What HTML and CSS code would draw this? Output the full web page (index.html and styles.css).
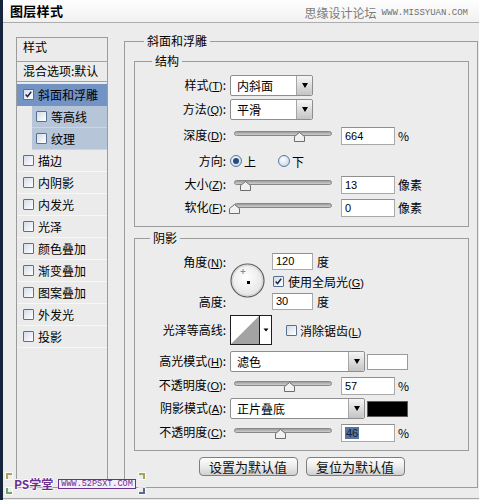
FILE: index.html
```html
<!DOCTYPE html>
<html lang="zh-CN">
<head>
<meta charset="utf-8">
<title>图层样式</title>
<link rel="stylesheet" href="styles.css">
</head>
<body>
<div class="dialog">
  <header class="titlebar">
    <span class="title">图层样式</span>
    <span class="wm">思缘设计论坛<span class="wm-url">WWW.MISSYUAN.COM</span></span>
  </header>

  <div class="main">
    <div class="list">
      <div class="lh">样式</div>
      <div class="lblend">混合选项:默认</div>
      <div class="li sel"><span class="cb"><svg viewBox="0 0 11 11" width="9" height="9"><path d="M2 5.5 L4.3 8 L8.8 2.2" fill="none" stroke="#1d2a44" stroke-width="1.8"/></svg></span>斜面和浮雕</div>
      <div class="li sub"><span class="cb"></span>等高线</div>
      <div class="li sub"><span class="cb"></span>纹理</div>
      <div class="li"><span class="cb"></span>描边</div>
      <div class="li"><span class="cb"></span>内阴影</div>
      <div class="li"><span class="cb"></span>内发光</div>
      <div class="li"><span class="cb"></span>光泽</div>
      <div class="li"><span class="cb"></span>颜色叠加</div>
      <div class="li"><span class="cb"></span>渐变叠加</div>
      <div class="li"><span class="cb"></span>图案叠加</div>
      <div class="li"><span class="cb"></span>外发光</div>
      <div class="li"><span class="cb"></span>投影</div>
    </div>

    <fieldset class="outer">
      <legend class="lg-outer">斜面和浮雕</legend>

      <fieldset class="grp grp-struct">
        <legend class="lg-struct">结构</legend>
        <div class="row r-sel">
          <span class="lbl">样式<span class="mn">(<u>T</u>)</span>:</span>
          <div class="select s-short"><span class="val">内斜面</span><span class="arr"><i></i></span></div>
        </div>
        <div class="row r-sel r-sel2">
          <span class="lbl">方法<span class="mn">(<u>Q</u>)</span>:</span>
          <div class="select s-short"><span class="val">平滑</span><span class="arr"><i></i></span></div>
        </div>
        <div class="row r-sl r-depth">
          <span class="lbl">深度<span class="mn">(<u>D</u>)</span>:</span>
          <div class="slider"><div class="track"></div><svg class="thumb" style="--v:0.664" viewBox="0 0 11 10" width="11" height="10"><polygon points="5.5,0.5 10.5,4.5 10.5,9.5 0.5,9.5 0.5,4.5" fill="#f1f1f1" stroke="#6d6d6d"/></svg></div>
          <span class="num">664</span><span class="unit">%</span>
        </div>
        <div class="row r-dir">
          <span class="lbl">方向:</span>
          <span class="radio on"></span><span class="rtxt">上</span>
          <span class="radio r2"></span><span class="rtxt">下</span>
        </div>
        <div class="row r-sl r-size">
          <span class="lbl">大小<span class="mn">(<u>Z</u>)</span>:</span>
          <div class="slider"><div class="track"></div><svg class="thumb" style="--v:0.115" viewBox="0 0 11 10" width="11" height="10"><polygon points="5.5,0.5 10.5,4.5 10.5,9.5 0.5,9.5 0.5,4.5" fill="#f1f1f1" stroke="#6d6d6d"/></svg></div>
          <span class="num">13</span><span class="unit">像素</span>
        </div>
        <div class="row r-sl r-soft">
          <span class="lbl">软化<span class="mn">(<u>F</u>)</span>:</span>
          <div class="slider"><div class="track"></div><svg class="thumb" style="--v:0" viewBox="0 0 11 10" width="11" height="10"><polygon points="5.5,0.5 10.5,4.5 10.5,9.5 0.5,9.5 0.5,4.5" fill="#f1f1f1" stroke="#6d6d6d"/></svg></div>
          <span class="num">0</span><span class="unit">像素</span>
        </div>
      </fieldset>

      <fieldset class="grp grp-shadow">
        <legend class="lg-shadow">阴影</legend>
        <div class="angle">
          <div class="alabels">
            <span class="albl">角度<span class="mn">(<u>N</u>)</span>:</span>
            <span class="albl">高度:</span>
          </div>
          <svg class="dial" viewBox="0 0 35 35" width="35" height="35">
            <defs>
              <radialGradient id="dg" cx="0.45" cy="0.4" r="0.6">
                <stop offset="0" stop-color="#ffffff"/>
                <stop offset="1" stop-color="#e4e4e4"/>
              </radialGradient>
            </defs>
            <circle cx="17.5" cy="17.5" r="16.5" fill="url(#dg)" stroke="#5e5e5e" stroke-width="1.2"/>
            <circle cx="17.5" cy="17.5" r="15.2" fill="none" stroke="#c9c9c9" stroke-width="0.8"/>
            <path d="M13 6 V11 M10.5 8.5 H15.5" stroke="#8a8a8a" stroke-width="1"/>
            <rect x="17" y="18" width="3" height="3" fill="#000"/>
          </svg>
          <div class="acol">
            <div class="aline"><span class="num n-ang">120</span><span class="unit u-deg">度</span></div>
            <div class="aline chk"><span class="cb cb-glob"><svg viewBox="0 0 11 11" width="9" height="9"><path d="M2 5.5 L4.3 8 L8.8 2.2" fill="none" stroke="#1d2a44" stroke-width="1.8"/></svg></span><span>使用全局光<span class="mn">(<u>G</u>)</span></span></div>
            <div class="aline"><span class="num n-ang">30</span><span class="unit u-deg">度</span></div>
          </div>
        </div>
        <div class="row r-contour">
          <span class="lbl">光泽等高线:</span>
          <svg class="contour" viewBox="0 0 42 30" width="42" height="30">
            <rect x="0.5" y="0.5" width="41" height="29" fill="#fff" stroke="#1e1e1e"/>
            <polygon points="1,29 29,1 29,29" fill="#a3a3a3"/>
            <line x1="29.5" y1="0.5" x2="29.5" y2="29.5" stroke="#1e1e1e"/>
            <polygon points="33.5,13.5 38.5,13.5 36,16.5" fill="#000"/>
          </svg>
          <span class="cb cb-aa"></span><span>消除锯齿<span class="mn">(<u>L</u>)</span></span>
        </div>
        <div class="row r-sel r-hl">
          <span class="lbl">高光模式<span class="mn">(<u>H</u>)</span>:</span>
          <div class="select s-long"><span class="val">滤色</span><span class="arr"><i></i></span></div>
          <span class="swatch sw-white"></span>
        </div>
        <div class="row r-sl r-op1">
          <span class="lbl">不透明度<span class="mn">(<u>O</u>)</span>:</span>
          <div class="slider"><div class="track"></div><svg class="thumb" style="--v:0.57" viewBox="0 0 11 10" width="11" height="10"><polygon points="5.5,0.5 10.5,4.5 10.5,9.5 0.5,9.5 0.5,4.5" fill="#f1f1f1" stroke="#6d6d6d"/></svg></div>
          <span class="num">57</span><span class="unit">%</span>
        </div>
        <div class="row r-sel r-sh">
          <span class="lbl">阴影模式<span class="mn">(<u>A</u>)</span>:</span>
          <div class="select s-long"><span class="val">正片叠底</span><span class="arr"><i></i></span></div>
          <span class="swatch sw-black"></span>
        </div>
        <div class="row r-sl r-op2">
          <span class="lbl">不透明度<span class="mn">(<u>C</u>)</span>:</span>
          <div class="slider"><div class="track"></div><svg class="thumb" style="--v:0.47" viewBox="0 0 11 10" width="11" height="10"><polygon points="5.5,0.5 10.5,4.5 10.5,9.5 0.5,9.5 0.5,4.5" fill="#f1f1f1" stroke="#6d6d6d"/></svg></div>
          <span class="num"><span class="hl">46</span></span><span class="unit">%</span>
        </div>
      </fieldset>

      <div class="btns">
        <button class="btn" type="button">设置为默认值</button>
        <button class="btn" type="button">复位为默认值</button>
      </div>
    </fieldset>
  </div>

  <div class="footer"></div>

  <div class="wm2">
    <span class="cn cn-tl"></span><span class="cn cn-tr"></span>
    <span class="cn cn-bl"></span><span class="cn cn-br"></span>
    <span class="wm2-ps">PS学堂</span>
    <span class="wm2-url">WWW.52PSXT.COM</span>
  </div>
</div>
</body>
</html>
```

FILE: styles.css
```css
* { box-sizing: border-box; }
html, body { margin: 0; padding: 0; }
body {
  width: 479px;
  height: 500px;
  overflow: hidden;
  background: #ececec;
  font-family: "Noto Sans CJK SC", "Liberation Sans", sans-serif;
  font-size: 12px;
  color: #000;
}
.dialog {
  position: relative;
  height: 500px;
  border-left: 3px solid #14243a;
  background: #ececec;
}

/* title bar */
.titlebar {
  height: 23px;
  border-bottom: 1px solid #adadad;
  background: linear-gradient(#fefefe, #f1f1f1);
  display: flex;
  align-items: center;
  justify-content: space-between;
  padding: 0 11px 0 7px;
}
.title { font-weight: bold; font-size: 13px; line-height: 16px; letter-spacing: 0.3px; }
.wm { color: #7b7b7b; font-size: 12px; line-height: 14px; display: flex; align-items: center; padding-top: 3px; }
.wm-url { font-family: "Liberation Mono", monospace; font-size: 9px; margin-left: 5px; color: #6f6f6f; }

.main { display: flex; align-items: flex-start; }

/* left list */
.list {
  margin: 14px 0 0 13px;
  width: 92px;
  height: 451px;
  border: 1px solid #9c9c9c;
  background: #ebebeb;
}
.lh {
  height: 24px;
  line-height: 18px;
  padding-left: 6px;
  border-bottom: 1px solid #a2a2a2;
}
.lblend {
  height: 20px;
  line-height: 17px;
  padding-left: 6px;
  border-bottom: 1px solid #a2a2a2;
  white-space: nowrap;
}
.li {
  height: 22px;
  display: flex;
  align-items: center;
  padding-left: 6px;
  border-bottom: 1px solid #f7f7f7;
  line-height: 14px;
  white-space: nowrap;
}
.li.sel { margin-top: 2px; background: #7393c4; border-bottom-color: #7393c4; }
.li.sub { margin-left: 15px; padding-left: 4px; background: #b7c5d8; border-bottom-color: #ccd6e3; }

.cb {
  display: inline-flex;
  align-items: center;
  justify-content: center;
  width: 11px;
  height: 11px;
  margin-right: 4px;
  border: 1px solid #56708f;
  border-radius: 1px;
  background: linear-gradient(135deg, #d3dce8, #ffffff);
  flex: none;
}

/* fieldsets */
fieldset { margin: 0; min-width: 0; border: 1px solid #9c9c9c; }
legend { font-size: 12px; line-height: 16px; padding: 0 3px; }
.outer {
  margin: 10px 0 0 16px;
  width: 354px;
  padding: 4px 8px 11px 9px;
}
.lg-outer { margin-left: 10px; }
.grp { padding: 0 0 9px 0; }
.grp-struct { padding-top: 6px; }
.grp-shadow { margin-top: 3px; padding-top: 7px; padding-bottom: 8px; }
.lg-struct { margin-left: 17px; }
.lg-shadow { margin-left: 15px; }

.row { display: flex; align-items: center; white-space: nowrap; }
.lbl { width: 91px; margin-right: 4px; text-align: right; line-height: 14px; flex: none; }
.mn { font-family: "Liberation Sans", sans-serif; font-size: 11px; }

.r-sel { height: 21px; }
.r-sel2 { margin-top: 3px; }
.r-sl { height: 19px; }
.r-depth { margin-top: 6px; }
.r-dir { height: 20px; margin-top: 6px; }
.r-size, .r-soft { margin-top: 4px; }

/* select */
.select {
  display: flex;
  height: 21px;
  border: 1px solid #8e8e8e;
  border-radius: 2px;
  background: #fff;
  flex: none;
}
.s-short { width: 83px; }
.s-long { width: 135px; }
.select .val { flex: 1; padding-left: 6px; line-height: 19px; }
.select .arr {
  width: 16px;
  border-left: 1px solid #a5a5a5;
  border-radius: 0 2px 2px 0;
  background: linear-gradient(#f6f6f6, #d8d8d8 60%, #c4c4c4);
  display: flex;
  align-items: center;
  justify-content: center;
}
.select .arr i {
  display: block;
  width: 0;
  height: 0;
  border-left: 3px solid transparent;
  border-right: 3px solid transparent;
  border-top: 5px solid #000;
}

/* slider */
.slider {
  position: relative;
  width: 106px;
  height: 19px;
  padding: 5px 4px 0;
  margin-right: 5px;
  flex: none;
}
.track {
  height: 5px;
  border: 1px solid #878787;
  border-radius: 3px;
  background: linear-gradient(#9d9d9d, #cfcfcf);
}
.thumb {
  position: absolute;
  top: 6px;
  left: calc(4px + var(--v) * 98px - 5.5px);
}

/* numeric fields */
.num {
  display: inline-block;
  width: 54px;
  height: 18px;
  border: 1px solid #a9a9a9;
  border-top-color: #8f8f8f;
  background: #fff;
  font-family: "Liberation Sans", sans-serif;
  font-size: 11px;
  line-height: 16px;
  padding-left: 3px;
  flex: none;
}
.unit { margin-left: 3px; line-height: 14px; }
.hl { background: #56759f; color: #14203a; padding: 0 1px; }

/* radio */
.radio {
  width: 12px;
  height: 12px;
  border-radius: 50%;
  border: 1px solid #5878a0;
  background: radial-gradient(circle at 40% 35%, #ffffff, #b9cde6);
  display: inline-flex;
  align-items: center;
  justify-content: center;
  flex: none;
}
.radio.on::after {
  content: "";
  width: 6px;
  height: 6px;
  border-radius: 50%;
  background: #2a4a7c;
}
.radio.r2 { margin-left: 22px; }
.rtxt { margin-left: 2px; }

/* angle block */
.angle { display: flex; height: 57px; }
.alabels {
  width: 91px;
  margin-right: 4px;
  display: flex;
  flex-direction: column;
  justify-content: space-between;
  align-items: flex-end;
}
.albl { height: 17px; line-height: 17px; white-space: nowrap; }
.dial { margin-top: 10px; flex: none; }
.acol { margin-left: 7px; display: flex; flex-direction: column; }
.aline { display: flex; align-items: center; height: 17px; white-space: nowrap; }
.aline + .aline { margin-top: 3px; }
.n-ang { width: 41px; height: 17px; line-height: 15px; }
.u-deg { margin-left: 4px; }
.cb-glob { margin-left: 1px; margin-right: 4px; }

.r-contour { height: 30px; margin-top: 5px; }
.contour { flex: none; }
.cb-aa { margin-left: 14px; margin-right: 3px; }

.r-hl { margin-top: 6px; }
.r-op1 { margin-top: 4px; }
.r-sh { margin-top: 3px; }
.r-op2 { margin-top: 4px; }

.swatch { width: 41px; height: 16px; margin-left: 2px; flex: none; }
.sw-white { background: #fff; border: 1px solid #9b9b9b; }
.sw-black { background: #000; border: 1px solid #5a5a5a; }

/* buttons */
.btns { display: flex; justify-content: center; gap: 8px; margin-top: 6px; }
.btn {
  width: 99px;
  height: 19px;
  padding: 0;
  border: 1px solid #7e7e7e;
  border-radius: 4px;
  background: linear-gradient(#fefefe, #ececec 50%, #d0d0d0);
  font-family: "Noto Sans CJK SC", sans-serif;
  font-size: 13px;
  line-height: 16px;
  color: #111;
}

.footer { height: 11px; border-bottom: 1px solid #a7a7a7; }

/* bottom-left watermark (overlay over the dialog) */
.wm2 {
  position: absolute;
  left: 3px;
  top: 473px;
  width: 139px;
  height: 21px;
  display: flex;
  align-items: center;
  gap: 5px;
  padding-left: 8px;
}
.cn {
  position: absolute;
  width: 6px;
  height: 6px;
  border-color: #a9a45a;
  border-style: solid;
  border-width: 0;
  box-shadow: 0 0 0 1px rgba(255,255,255,0.7);
}
.cn-tl { left: 0; top: 0; border-top-width: 2px; border-left-width: 2px; }
.cn-tr { right: 0; top: 0; border-top-width: 2px; border-right-width: 2px; }
.cn-bl { left: 0; bottom: 0; border-bottom-width: 2px; border-left-width: 2px; border-color: #6aa86a; }
.cn-br { right: 0; bottom: 0; border-bottom-width: 2px; border-right-width: 2px; border-color: #5c6a8a; }
.wm2-ps {
  font-weight: bold;
  font-size: 12px;
  line-height: 14px;
  color: #6b2f8f;
  text-shadow: 1px 0 #fff, -1px 0 #fff, 0 1px #fff, 0 -1px #fff;
}
.wm2-url {
  font-family: "Liberation Mono", monospace;
  font-size: 8.5px;
  line-height: 8px;
  color: #6b2f8f;
  background: #f4eef8;
  padding: 0 2px;
  border: 1px solid #6b2f8f;
}
```
